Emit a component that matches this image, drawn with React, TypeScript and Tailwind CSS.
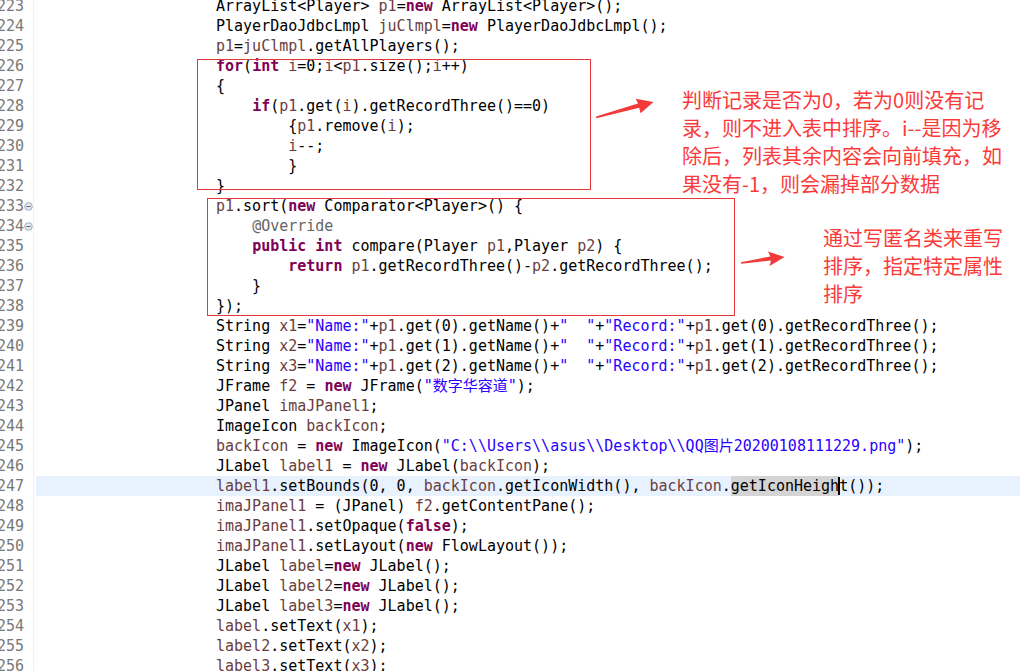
import React from "react";

type Seg = string | { t: string; c: "k" | "s" | "v" | "a" | "sel" | "cur" };

const k = (t: string): Seg => ({ t, c: "k" });
const s = (t: string): Seg => ({ t, c: "s" });
const v = (t: string): Seg => ({ t, c: "v" });
const a = (t: string): Seg => ({ t, c: "a" });

const nameLine = (x: string, n: string): Seg[] => [
  "String ",
  v(x),
  "=",
  s('"Name:"'),
  "+",
  v("p1"),
  `.get(${n}).getName()+`,
  s('"  "'),
  "+",
  s('"Record:"'),
  "+",
  v("p1"),
  `.get(${n}).getRecordThree();`,
];

const lines: Seg[][] = [
  ["ArrayList<Player> ", v("p1"), "=", k("new"), " ArrayList<Player>();"],
  ["PlayerDaoJdbcLmpl ", v("juClmpl"), "=", k("new"), " PlayerDaoJdbcLmpl();"],
  [v("p1"), "=", v("juClmpl"), ".getAllPlayers();"],
  [k("for"), "(", k("int"), " ", v("i"), "=0;", v("i"), "<", v("p1"), ".size();", v("i"), "++)"],
  ["{"],
  ["    ", k("if"), "(", v("p1"), ".get(", v("i"), ").getRecordThree()==0)"],
  ["        {", v("p1"), ".remove(", v("i"), ");"],
  ["        ", v("i"), "--;"],
  ["        }"],
  ["}"],
  [v("p1"), ".sort(", k("new"), " Comparator<Player>() {"],
  ["    ", a("@Override")],
  ["    ", k("public"), " ", k("int"), " compare(Player ", v("p1"), ",Player ", v("p2"), ") {"],
  ["        ", k("return"), " ", v("p1"), ".getRecordThree()-", v("p2"), ".getRecordThree();"],
  ["    }"],
  ["});"],
  nameLine("x1", "0"),
  nameLine("x2", "1"),
  nameLine("x3", "2"),
  ["JFrame ", v("f2"), " = ", k("new"), " JFrame(", s('"数字华容道"'), ");"],
  ["JPanel ", v("imaJPanel1"), ";"],
  ["ImageIcon ", v("backIcon"), ";"],
  [
    v("backIcon"),
    " = ",
    k("new"),
    " ImageIcon(",
    s('"C:\\\\Users\\\\asus\\\\Desktop\\\\QQ图片20200108111229.png"'),
    ");",
  ],
  ["JLabel ", v("label1"), " = ", k("new"), " JLabel(", v("backIcon"), ");"],
  [
    v("label1"),
    ".setBounds(0, 0, ",
    v("backIcon"),
    ".getIconWidth(), ",
    v("backIcon"),
    ".",
    { t: "getIconHeigh", c: "sel" },
    { t: "", c: "cur" },
    "t());",
  ],
  [v("imaJPanel1"), " = (JPanel) ", v("f2"), ".getContentPane();"],
  [v("imaJPanel1"), ".setOpaque(", k("false"), ");"],
  [v("imaJPanel1"), ".setLayout(", k("new"), " FlowLayout());"],
  ["JLabel ", v("label"), "=", k("new"), " JLabel();"],
  ["JLabel ", v("label2"), "=", k("new"), " JLabel();"],
  ["JLabel ", v("label3"), "=", k("new"), " JLabel();"],
  [v("label"), ".setText(", v("x1"), ");"],
  [v("label2"), ".setText(", v("x2"), ");"],
  [v("label3"), ".setText(", v("x3"), ");"],
];

const FIRST = 223;
const CURRENT = 247;
const FOLDS = [233, 234];

function renderSeg(seg: Seg, i: number) {
  if (typeof seg === "string") return <span key={i}>{seg}</span>;
  switch (seg.c) {
    case "k":
      return (
        <span key={i} className="font-bold text-[#7f0055]">
          {seg.t}
        </span>
      );
    case "s":
      return (
        <span key={i} className="text-[#2a00ff]">
          {seg.t}
        </span>
      );
    case "v":
      return (
        <span key={i} className="text-[#6a3e3e]">
          {seg.t}
        </span>
      );
    case "a":
      return (
        <span key={i} className="text-[#646464]">
          {seg.t}
        </span>
      );
    case "sel":
      return (
        <span key={i} className="inline-block h-[20px] bg-[#d4d4d4] align-top">
          {seg.t}
        </span>
      );
    case "cur":
      return (
        <span key={i} className="relative inline-block h-[20px] w-0 align-top">
          <span className="absolute left-[-1px] top-[1px] h-[18px] w-[2px] bg-black" />
        </span>
      );
  }
}

function FoldIcon() {
  return (
    <svg width="9" height="9" viewBox="0 0 9 9">
      <circle cx="4.5" cy="4.5" r="3.8" fill="#e4e9f0" stroke="#98a4b5" strokeWidth="0.9" />
      <line x1="2.4" y1="4.5" x2="6.6" y2="4.5" stroke="#5d6a7c" strokeWidth="1" />
    </svg>
  );
}

export default function App() {
  return (
    <div className="relative h-[671px] w-[1020px] overflow-hidden bg-white">
      <div className="-mt-[4px] flex flex-col font-['DejaVu_Sans_Mono','Noto_Sans_CJK_SC',monospace] text-[15px] leading-[20px] text-black">
        {lines.map((segs, idx) => {
          const n = FIRST + idx;
          const cur = n === CURRENT;
          return (
            <div key={n} className="flex h-[20px]">
              <div className="flex w-[24px] shrink-0 justify-end whitespace-pre text-[#787878]">
                <span>{n}</span>
              </div>
              <div className="flex w-[9px] shrink-0 items-center justify-center">
                {FOLDS.includes(n) ? <FoldIcon /> : null}
              </div>
              <div className="w-[1px] shrink-0 bg-[#f1f1f1]" />
              <div className="w-[2px] shrink-0" />
              <div
                className={`flex-1 whitespace-pre pl-[180px] ${cur ? "bg-[#e8f2fe]" : ""}`}
              >
                {segs.map(renderSeg)}
              </div>
            </div>
          );
        })}
      </div>

      {/* annotation boxes */}
      <div className="pointer-events-none absolute left-[197px] top-[59px] h-[131px] w-[394px] border border-[#e5383b]" />
      <div className="pointer-events-none absolute left-[207px] top-[198px] h-[118px] w-[528px] border border-[#e5383b]" />

      {/* arrows */}
      <svg
        className="pointer-events-none absolute left-0 top-0"
        width="1020"
        height="671"
        viewBox="0 0 1020 671"
      >
        <polygon
          points="596,116.6 638,103.6 635.8,98.8 653.5,102 640.6,113.2 639.2,107.8 596.4,118.2"
          fill="#f23a3a"
        />
        <polygon
          points="741,262.2 770.4,256.4 768,251.6 784.5,257 769.6,266 771,260.4 741.2,263.8"
          fill="#f23a3a"
        />
      </svg>

      {/* annotation texts */}
      <div className="absolute left-[682px] top-[86px] whitespace-nowrap font-['Noto_Sans_CJK_SC','Microsoft_YaHei',sans-serif] text-[20px] leading-[28px] text-[#fb3a3a]">
        判断记录是否为0，若为0则没有记
        <br />
        录，则不进入表中排序。i--是因为移
        <br />
        除后，列表其余内容会向前填充，如
        <br />
        果没有-1，则会漏掉部分数据
      </div>
      <div className="absolute left-[823px] top-[224px] whitespace-nowrap font-['Noto_Sans_CJK_SC','Microsoft_YaHei',sans-serif] text-[20px] leading-[28px] text-[#fb3a3a]">
        通过写匿名类来重写
        <br />
        排序，指定特定属性
        <br />
        排序
      </div>
    </div>
  );
}
